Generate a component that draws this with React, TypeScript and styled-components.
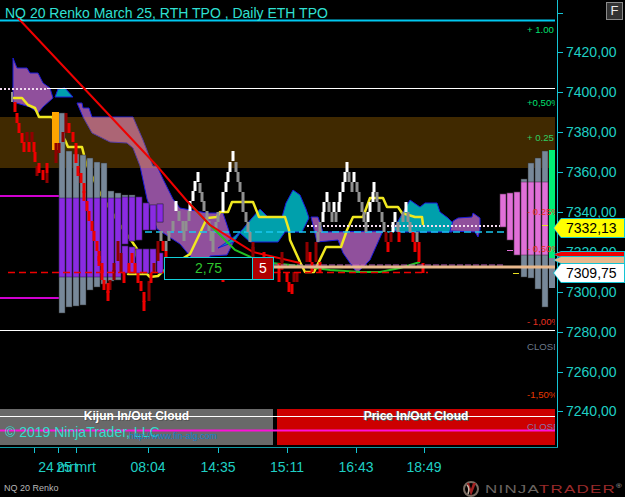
import React from "react";
import styled, { createGlobalStyle } from "styled-components";

const Global = createGlobalStyle`
  html, body { margin: 0; padding: 0; background: #000; }
  body { font-family: "Liberation Sans", Arial, sans-serif; overflow: hidden; }
`;

const Page = styled.div`
  width: 625px;
  height: 497px;
  background: #000;
  display: flex;
  flex-direction: column;
  overflow: hidden;
`;
const ChartRow = styled.div`
  display: flex;
  height: 448px;
  flex: none;
`;
const Plot = styled.div`
  position: relative;
  width: 555px;
  height: 448px;
  flex: none;
  overflow: hidden;
`;
const PriceAxis = styled.div`
  position: relative;
  flex: 1;
  margin-left: 2px;
  border-left: 1px solid #14c4d4;
  display: flex;
  flex-direction: column;
  padding-top: 13px;
`;
const AxisRow = styled.div<{ $h: number }>`
  height: ${(p) => p.$h}px;
  flex: none;
  display: flex;
  align-items: flex-start;
  gap: 3px;
  color: #1fcfc4;
  font-size: 14px;
  line-height: 1px;
  &::before {
    content: "";
    width: 5px;
    height: 1px;
    flex: none;
    background: #14c4d4;
  }
`;
const Drawing = styled.svg`
  position: absolute;
  inset: 0;
  display: block;
`;
const Panels = styled.div`
  position: absolute;
  left: 0;
  right: 0;
  top: 409px;
  height: 36px;
  display: flex;
  gap: 4px;
`;
const CloudPanel = styled.div<{ $bg: string; $width: number }>`
  width: ${(p) => p.$width}px;
  flex: none;
  background: ${(p) => p.$bg};
  color: #fff;
  font-size: 12px;
  font-weight: 700;
  text-align: center;
  line-height: 14px;
  text-shadow: 1px 1px 0 #555, -1px 0 0 #555;
`;
const Title = styled.div`
  position: absolute;
  left: 5px;
  top: 5px;
  color: #2fe0d4;
  font-size: 14px;
  line-height: 17px;
  white-space: nowrap;
`;
const Copyright = styled.div`
  position: absolute;
  left: 5px;
  top: 424px;
  color: #34dccb;
  font-size: 14px;
  line-height: 16px;
  white-space: nowrap;
`;
const Website = styled.div`
  position: absolute;
  left: 129px;
  top: 431px;
  color: #1280c8;
  font-size: 9px;
  line-height: 11px;
  white-space: nowrap;
`;
const LevelLabel = styled.div<{ $y: number; $color: string }>`
  position: absolute;
  left: 527px;
  top: ${(p) => p.$y - 6}px;
  color: ${(p) => p.$color};
  font-size: 9.6px;
  line-height: 12px;
  white-space: nowrap;
`;
const SpreadBox = styled.div`
  position: absolute;
  left: 164px;
  top: 257px;
  height: 23px;
  display: flex;
`;
const SpreadValue = styled.div`
  width: 89px;
  box-sizing: border-box;
  border: 1px solid #12d0d8;
  background: #000;
  color: #2fc52f;
  font-size: 14px;
  line-height: 21px;
  text-align: center;
`;
const SpreadCount = styled.div`
  width: 21px;
  box-sizing: border-box;
  border: 1px solid #12d0d8;
  border-left: 0;
  background: #b00000;
  color: #fff;
  font-size: 14px;
  line-height: 21px;
  text-align: center;
`;
const TagOutline = styled.div<{ $y: number; $h: number; $edge: string }>`
  position: absolute;
  left: -5px;
  right: 0;
  top: ${(p) => p.$y}px;
  height: ${(p) => p.$h}px;
  box-sizing: border-box;
  padding: 1px;
  background: ${(p) => p.$edge};
  clip-path: polygon(8px 0, 100% 0, 100% 100%, 8px 100%, 0 50%);
`;
const TagFill = styled.div<{ $bg: string }>`
  height: 100%;
  box-sizing: border-box;
  padding-left: 12px;
  background: ${(p) => p.$bg};
  clip-path: polygon(7px 0, 100% 0, 100% 100%, 7px 100%, 0 50%);
  color: #000;
  font-size: 14px;
  line-height: 18px;
`;
const FButton = styled.div`
  position: absolute;
  left: 48px;
  top: 2px;
  width: 17px;
  height: 18px;
  box-sizing: border-box;
  border: 1px solid #8a8a8a;
  background: #333;
  color: #eee;
  font-size: 13px;
  line-height: 16px;
  text-align: center;
`;
const TimeAxis = styled.div`
  position: relative;
  height: 28px;
  flex: none;
  width: 558px;
  border-top: 1px solid #0e9aa4;
  margin-top: -1px;
`;
const TimeTick = styled.div<{ $x: number }>`
  position: absolute;
  left: ${(p) => p.$x}px;
  top: 0;
  width: 1px;
  height: 5px;
  background: #14c4d4;
`;
const TimeLabel = styled.div<{ $x: number }>`
  position: absolute;
  left: ${(p) => p.$x - 30}px;
  top: 11px;
  width: 60px;
  text-align: center;
  color: #1fcfc4;
  font-size: 14px;
  line-height: 17px;
  white-space: nowrap;
`;
const Footer = styled.div`
  flex: 1;
  display: flex;
  align-items: center;
  justify-content: space-between;
  padding: 0 2px 0 4px;
`;
const SeriesName = styled.div`
  color: #b8b8b8;
  font-size: 9px;
  line-height: 12px;
  margin-top: 3px;
`;
const Logo = styled.div`
  display: flex;
  align-items: center;
  gap: 4px;
  margin-top: 4px;
`;
const LogoText = styled.div`
  width: 138px;
  font-size: 11px;
  line-height: 14px;
  letter-spacing: 0.8px;
  color: #6a6460;
  white-space: nowrap;
  transform: scaleX(1.54);
  transform-origin: left center;
  span { color: #9a2a2a; }
  sup { font-size: 5px; color: #b0b0b0; letter-spacing: 0; line-height: 0; }
`;

const UP_W: number[][] = [
  [175, 201], [189, 201], [192, 191], [194, 181], [197, 172], [222, 202], [222, 192], [225, 182], [227, 172], [229, 162], [232, 151],
  [322, 212], [323, 202], [326, 192], [333, 202], [338, 202], [339, 192], [342, 182], [344, 172], [346, 162], [353, 172],
  [367, 212], [369, 202], [372, 192], [373, 182], [392, 222], [394, 212], [405, 202],
];
const DN_G: number[][] = [
  [160, 231], [168, 231], [165, 241], [172, 221], [178, 211], [182, 221], [183, 231], [185, 221], [188, 211], [199, 183], [201, 192], [203, 201], [206, 211], [208, 221], [210, 231],
  [212, 232], [212, 242], [215, 222], [217, 212], [235, 162], [237, 172], [239, 182], [242, 192], [242, 202], [245, 212], [247, 222], [249, 232],
  [317, 232], [319, 222], [328, 202], [331, 212], [335, 212], [348, 172], [351, 182], [356, 182], [358, 192], [361, 202], [363, 212], [365, 222],
  [376, 192], [378, 202], [381, 212], [383, 222], [397, 222], [402, 212], [407, 212], [409, 222], [416, 232],
];
const RED: number[][] = [
  [14, 102], [16, 113], [18, 123], [21, 133], [23, 142], [28, 142], [33, 142], [34, 152], [38, 163], [42, 170], [46, 163], [68, 123], [72, 132], [75, 143], [75, 153], [77, 166], [80, 173], [83, 183], [83, 191],
  [86, 201], [88, 211], [91, 221], [93, 231], [96, 241], [98, 251], [98, 256], [101, 263], [101, 270], [103, 280], [107, 283], [107, 291], [123, 273], [128, 263], [131, 253], [134, 263], [137, 273], [140, 281], [143, 292], [143, 301],
  [150, 273], [162, 241], [165, 251], [263, 252], [278, 263], [278, 272], [286, 272], [288, 282], [291, 284], [309, 252], [311, 262], [319, 262],
  [387, 242], [398, 232], [412, 232], [414, 242], [418, 242], [418, 252], [422, 263], [205, 263], [222, 272],
];
const DARK: number[][] = [
  [26, 132], [31, 132], [36, 166], [46, 173], [55, 143], [55, 153], [58, 143], [62, 132], [65, 113], [65, 123], [109, 280], [113, 263], [113, 270], [117, 241], [117, 251], [120, 253], [120, 263],
  [148, 281], [148, 291], [153, 263], [157, 241], [157, 251], [252, 242], [252, 247], [281, 252], [281, 260], [293, 272], [296, 272], [306, 242], [306, 252], [315, 242], [315, 252], [385, 232], [390, 232],
];

type Bar = [number, number, number, number, number];
const bars: Bar[] = [
  [59, 113, 198, 277, 313], [66, 151, 198, 277, 307], [73, 154, 198, 277, 306], [80, 155, 198, 277, 305], [87, 158, 198, 277, 290], [94, 162, 198, 277, 287], [101, 163, 198, 277, 284],
  [108, 191, 198, 277, 281], [115, 193, 198, 277, 280],
];
const midBars: Bar[] = [
  [122, 195, 197, 244, 244], [129, 195, 197, 241, 241], [136, 197, 197, 240, 240], [143, 203, 203, 230, 230], [150, 205, 205, 230, 230], [157, 204, 204, 222, 222], [122, 246, 246, 273, 273], [129, 247, 247, 273, 273], [136, 249, 249, 273, 273], [143, 249, 249, 273, 273], [150, 249, 249, 273, 273], [157, 253, 253, 273, 273],
];
const rightBars: Bar[] = [
  [500, 194, 194, 227, 227], [507, 193, 193, 240, 240], [514, 192, 192, 255, 255], [521, 179, 182, 255, 277], [528, 163, 182, 255, 278], [535, 158, 182, 255, 289], [542, 151, 182, 255, 307],
];

const BLUE = "#1a1ad8";
const CLOUD = "#90509c";
const TEAL = "#00a0ac";

const Clouds = () => (
  <g strokeWidth={1} stroke={BLUE} strokeLinejoin="round">
    <polygon fill={CLOUD} points="13,58 17,68 27,68 30,73 38,73 43,83 50,88 53,98 43,107 38,113 30,107 13,102" />
    <polygon fill={TEAL} points="55,97 58,89 65,88 73,97" />
    <polygon fill={CLOUD} points="77,103 82,103 83,108 89,108 92,117 133,117 143,140 153,166 157,166 163,179 173,199 180,208 207,213 223,213 233,243 227,255 210,256 205,280 190,256 180,244 157,229 147,199 140,166 133,148 127,143 110,142 92,133 83,117" />
    <polygon fill={TEAL} points="218,248 230,240 242,230 252,218 260,209 268,217 282,217 286,203 293,190 300,195 306,209 309,218 302,232 285,232 278,242 250,242 240,233 234,242" />
    <polygon fill={CLOUD} points="311,217 318,217 323,232 383,231 370,260 357,273 343,253 338,240 317,242" />
    <polygon fill={TEAL} points="393,230 410,200 420,207 425,203 437,203 440,212 448,218 453,223 452,232 398,232" />
    <polygon fill={CLOUD} points="453,221 458,218 472,217 473,213 480,218 480,230 478,237 475,232 450,231" />
  </g>
);

const App = () => {
  const prices = [7420, 7400, 7380, 7360, 7340, 7320, 7300, 7280, 7260, 7240];
  const times: [string, number][] = [["24 mrt", 58], ["25 mrt", 76], ["08:04", 148], ["14:35", 218], ["15:11", 287], ["16:43", 356], ["18:49", 424]];
  const ticks = [34, 58, 76, 148, 218, 287, 356, 424];

  return (
    <Page>
      <Global />
      <ChartRow>
        <Plot>
          <Panels>
            <CloudPanel $bg="#696969" $width={273}>Kijun In/Out Cloud</CloudPanel>
            <CloudPanel $bg="#cc0000" $width={278}>Price In/Out Cloud</CloudPanel>
          </Panels>
          <Drawing width={555} height={448} viewBox="0 0 555 448">
            <line x1={0} x2={555} y1={20.5} y2={20.5} stroke="#00c8f0" strokeWidth={2} />
            <line x1={0} x2={60} y1={196} y2={196} stroke="#d000d0" strokeWidth={2} />
            <line x1={0} x2={60} y1={298} y2={298} stroke="#d000d0" strokeWidth={2} />
            <line x1={0} x2={555} y1={330.5} y2={330.5} stroke="#fff" />
            <Clouds />
            <line x1={47} x2={555} y1={88.5} y2={88.5} stroke="#fff" />
            <line x1={0} x2={47} y1={89} y2={89} stroke="#f0d8f0" strokeWidth={2} strokeDasharray="2 2" />
            <rect x={0} y={117} width={555} height={51} fill="#ffa500" fillOpacity={0.25} />
            <polyline fill="none" stroke="#f0e820" strokeWidth={2.5} strokeLinejoin="round"
              points="13,98 22,98 28,105 35,108 39,117 52,117 65,140 68,147 82,147 86,163 93,178 100,193 120,225 133,243 137,249 128,274 135,274 147,274 150,277 158,276 163,271 190,254 200,233 207,218 217,217 220,212 228,212 232,202 253,202 259,217 285,217 289,230 290,240 300,262 305,272 314,272 326,247 341,247 347,230 353,217 363,217 370,198 383,198 387,207 398,207 402,213 415,217 422,217 423,225" />
            {[...bars, ...midBars].map(([x, t, pt, pb, b], i) => (
              <g key={i}>
                <rect x={x} y={t} width={6} height={b - t} fill="#778899" stroke="#333" strokeWidth={0.5} />
                {pb > pt && <rect x={x} y={pt} width={6} height={pb - pt} fill="#8a2be2" stroke="#2a1a50" strokeWidth={0.5} />}
              </g>
            ))}
            <rect x={549} y={150} width={6} height={108} fill="#00ee77" />
            <rect x={549} y={258} width={6} height={30} fill="#778899" />
            {rightBars.map(([x, t, pt, pb, b], i) => (
              <g key={i}>
                <rect x={x} y={t} width={6} height={b - t} fill="#778899" stroke="#333" strokeWidth={0.5} />
                <rect x={x} y={pt} width={6} height={pb - pt} fill="#e070d8" stroke="#40203c" strokeWidth={0.5} />
              </g>
            ))}
            <rect x={52} y={112} width={7} height={38} fill="#ffa500" />
            <rect x={11} y={92} width={2} height={10} fill="#909090" />
            <line x1={145} x2={505} y1={232} y2={232} stroke="#18c8f0" strokeWidth={1.5} strokeDasharray="7 4" />
            <line x1={307} x2={500} y1={226} y2={226} stroke="#f4dcf0" strokeWidth={2} strokeDasharray="2 2" />
            {DN_G.map(([x, y], i) => <rect key={"g" + i} x={x - 0.5} y={y} width={3} height={10} fill="#909090" />)}
            {UP_W.map(([x, y], i) => <rect key={"w" + i} x={x - 0.5} y={y} width={3} height={10} fill="#fff" />)}
            <polyline fill="none" stroke="#22c022" strokeWidth={2}
              points="190,204 203,218 217,232 235,250 262,262 300,266 330,270 360,272 380,272 400,268 420,262" />
            <polyline fill="none" stroke="#ee0000" strokeWidth={2} points="18,18 157,166 187,201 210,225 253,252 300,263" />
            {DARK.map(([x, y], i) => <rect key={"d" + i} x={x - 0.5} y={y} width={3} height={10} fill="#8f0000" />)}
            {RED.map(([x, y], i) => <rect key={"r" + i} x={x - 0.5} y={y} width={3} height={10} fill="#ee0000" />)}
            <line x1={8} x2={428} y1={272.5} y2={272.5} stroke="#ee0000" strokeWidth={1.5} strokeDasharray="7 4" />
            <line x1={273} x2={505} y1={265} y2={265} stroke="#c060c0" strokeWidth={1} strokeDasharray="6 2" />
            <rect x={273} y={265.5} width={282} height={3} fill="#e8b88c" />
            <rect x={513} y={273} width={6} height={1} fill="#e8e020" />
            <rect x={507} y={250} width={6} height={1} fill="#e070d8" />
            <rect x={542} y={225} width={6} height={1} fill="#e8e020" />
            <line x1={0} x2={555} y1={416.5} y2={416.5} stroke="#fff" />
            <line x1={0} x2={555} y1={430.5} y2={430.5} stroke="#ff10d8" strokeWidth={2} />
          </Drawing>
          <Title>NQ 20 Renko March 25, RTH TPO , Daily ETH TPO</Title>
          <LevelLabel $y={30} $color="#00e070">+ 1.00</LevelLabel>
          <LevelLabel $y={103} $color="#00e070">+0,50%</LevelLabel>
          <LevelLabel $y={138} $color="#30d060">+ 0.25</LevelLabel>
          <LevelLabel $y={212} $color="#e83020">- 0.25%</LevelLabel>
          <LevelLabel $y={249} $color="#e83020">- 0,50%</LevelLabel>
          <LevelLabel $y={322} $color="#e83020">- 1,00%</LevelLabel>
          <LevelLabel $y={347} $color="#6c7a8a">CLOSE</LevelLabel>
          <LevelLabel $y={395} $color="#e83800">-1,50%</LevelLabel>
          <LevelLabel $y={427} $color="#8a70a8">CLOSE</LevelLabel>
          <SpreadBox>
            <SpreadValue>2,75</SpreadValue>
            <SpreadCount>5</SpreadCount>
          </SpreadBox>
          <Copyright>© 2019 NinjaTrader, LLC</Copyright>
          <Website>http://www.fin-alg.com</Website>
        </Plot>
        <PriceAxis>
          <AxisRow $h={39} />
          {prices.map((p) => (
            <AxisRow key={p} $h={39.95}>{p},00</AxisRow>
          ))}
          <TagOutline $y={251} $h={7} $edge="#14c4d4"><TagFill $bg="#ee0000" /></TagOutline>
          <TagOutline $y={256} $h={8} $edge="#14c4d4"><TagFill $bg="#e8b88c" /></TagOutline>
          <TagOutline $y={218} $h={20} $edge="#14c4d4"><TagFill $bg="#ffff00">7332,13</TagFill></TagOutline>
          <TagOutline $y={263} $h={20} $edge="#14c4d4"><TagFill $bg="#ffffff">7309,75</TagFill></TagOutline>
          <FButton>F</FButton>
        </PriceAxis>
      </ChartRow>
      <TimeAxis>
        {ticks.map((x) => <TimeTick key={x} $x={x} />)}
        {times.map(([t, x]) => <TimeLabel key={t} $x={x}>{t}</TimeLabel>)}
      </TimeAxis>
      <Footer>
        <SeriesName>NQ 20 Renko</SeriesName>
        <Logo>
          <svg width="19" height="16" viewBox="0 0 19 16">
            <circle cx="9" cy="8" r="7" fill="none" stroke="#7a6c62" strokeWidth="2" />
            <path d="M5 2 L9 15 L14 2 L11 2 L9 8 L7 2 Z" fill="#a02020" />
            <path d="M5 4 C7 6 7 10 6 13" fill="none" stroke="#c8b8a8" strokeWidth="1.5" />
          </svg>
          <LogoText>NINJA<span>TRADER</span><sup>®</sup></LogoText>
        </Logo>
      </Footer>
    </Page>
  );
};

export default App;
